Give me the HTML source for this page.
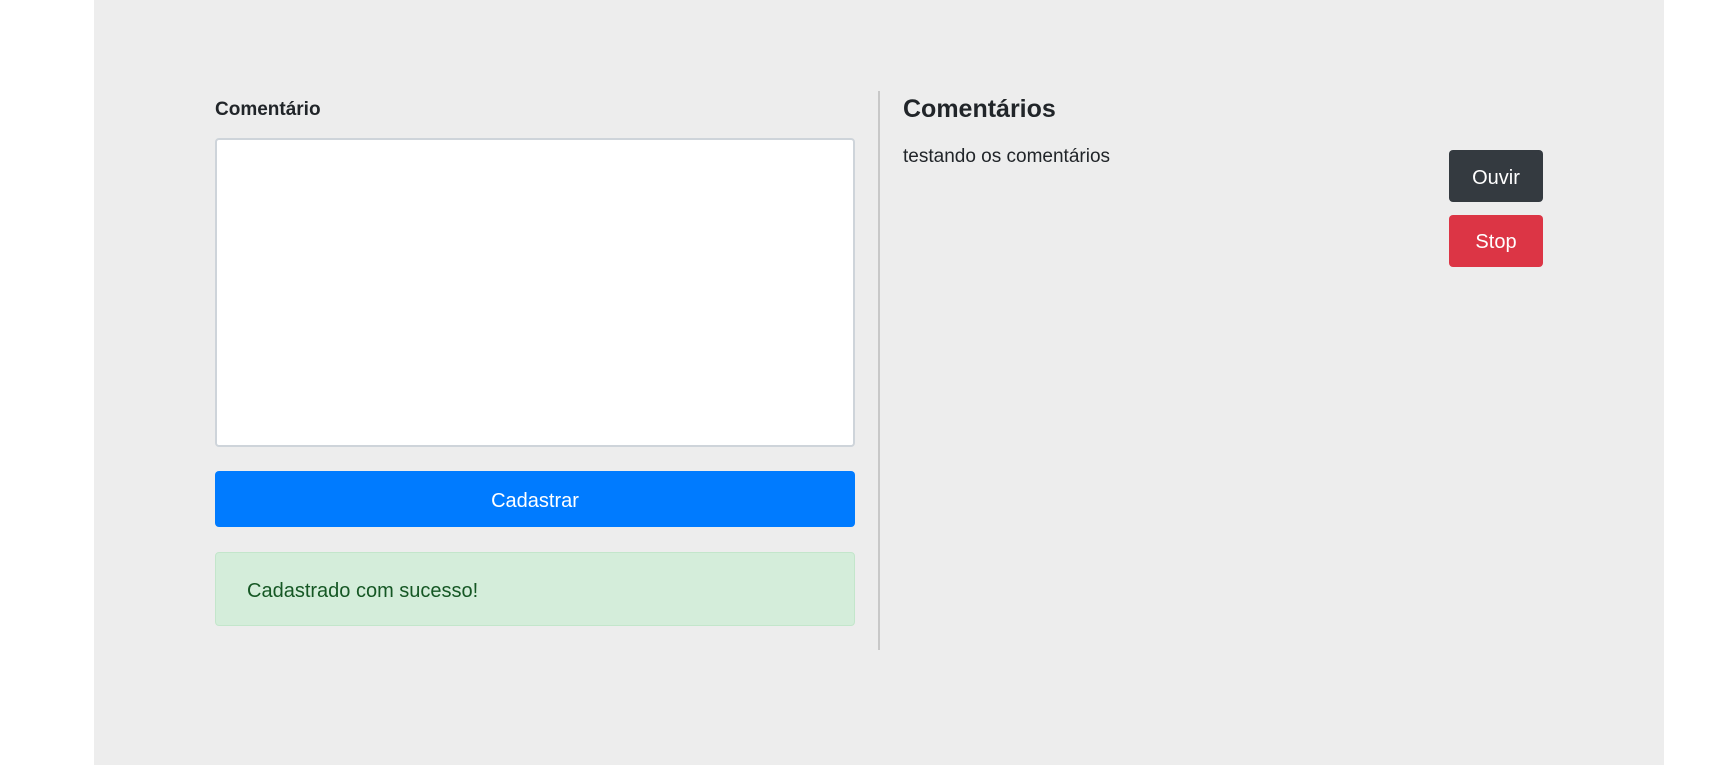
<!DOCTYPE html>
<html><head><meta charset="utf-8"><style>
*{box-sizing:border-box;margin:0;padding:0}
body{width:1733px;height:765px;background:#fff;font-family:"Liberation Sans",sans-serif;color:#212529;position:relative;overflow:hidden}
.bg{position:absolute;left:94px;top:0;width:1570px;height:765px;background:#ededed}
.abs{position:absolute}
</style></head><body>
<div class="bg"></div>
<div class="abs" style="left:215px;top:99px;font-size:19px;font-weight:bold;">Comentário</div>
<div class="abs" style="left:215px;top:138px;width:640px;height:309px;background:#fff;border:2px solid #ced4da;border-radius:4px"></div>
<div class="abs" style="left:215px;top:471px;width:640px;height:56px;background:#007bff;border-radius:4px;color:#fff;font-size:20px;text-align:center;line-height:60px">Cadastrar</div>
<div class="abs" style="left:215px;top:552px;width:640px;height:74px;background:#d4edda;border:1px solid #c3e6cb;border-radius:4px;color:#155724;font-size:20px;line-height:76px;padding-left:31px">Cadastrado com sucesso!</div>
<div class="abs" style="left:878px;top:91px;width:2px;height:559px;background:#c8c8c8"></div>
<div class="abs" style="left:903px;top:95px;font-size:25px;font-weight:bold;">Comentários</div>
<div class="abs" style="left:903px;top:146px;font-size:19px;">testando os comentários</div>
<div class="abs" style="left:1449px;top:150px;width:94px;height:52px;background:#343a40;border-radius:4px;color:#fff;font-size:20px;text-align:center;line-height:56px">Ouvir</div>
<div class="abs" style="left:1449px;top:215px;width:94px;height:52px;background:#dc3545;border-radius:4px;color:#fff;font-size:20px;text-align:center;line-height:54px">Stop</div>
</body></html>
